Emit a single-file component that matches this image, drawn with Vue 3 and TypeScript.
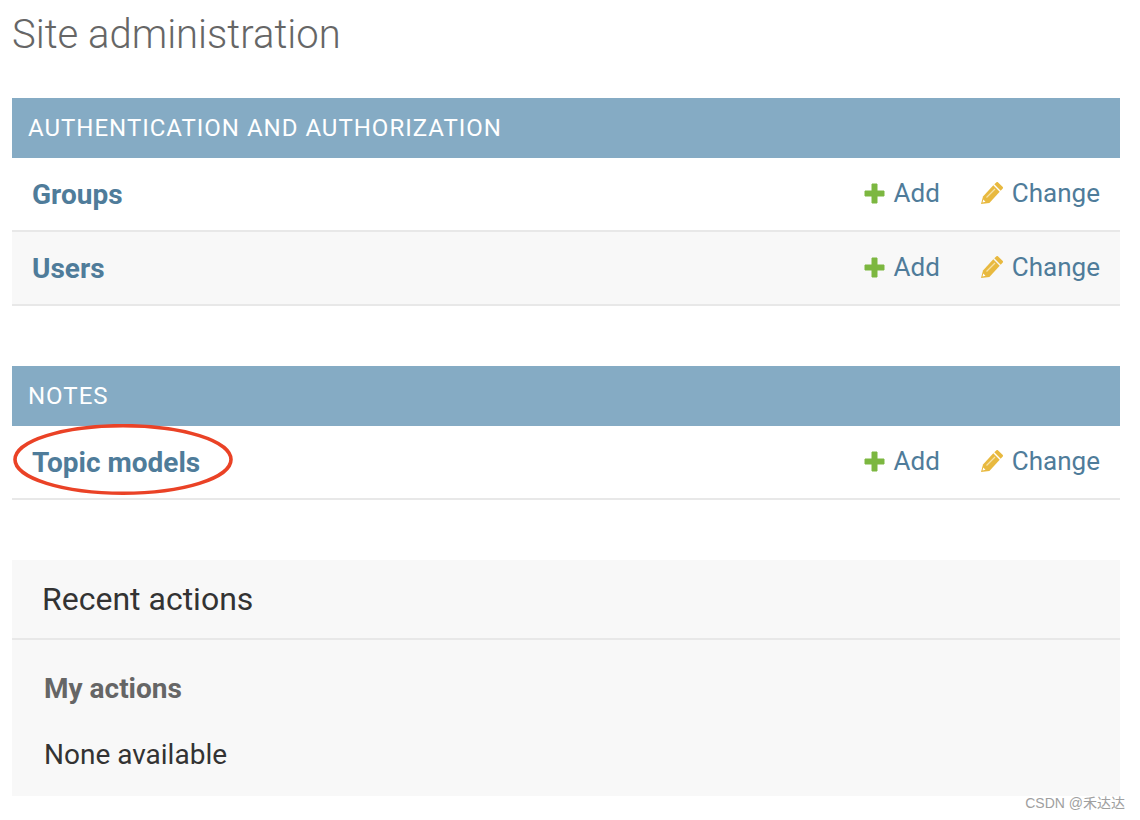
<script setup lang="ts">
interface Module {
  caption: string
  models: string[]
}

const modules: Module[] = [
  { caption: 'Authentication and Authorization', models: ['Groups', 'Users'] },
  { caption: 'Notes', models: ['Topic models'] },
]
</script>

<template>
  <div class="page">
    <h1 class="title">Site administration</h1>

    <section v-for="mod in modules" :key="mod.caption" class="module">
      <h2 class="caption">{{ mod.caption }}</h2>
      <div v-for="name in mod.models" :key="name" class="row">
        <a class="model">
          {{ name }}
          <svg v-if="name === 'Topic models'" class="circle" viewBox="0 0 222 74" width="222" height="74">
            <ellipse cx="110" cy="35.500" rx="108" ry="33.800" fill="none" stroke="#ea4226" stroke-width="3.600" />
          </svg>
        </a>
        <a class="action add">
          <svg viewBox="0 0 23 23" width="23" height="23">
            <path d="M9 2h5v7h7v5h-7v7H9v-7H2V9h7z" fill="#7cb740" stroke="#7cb740" stroke-width="1" stroke-linejoin="round" />
          </svg>
          Add
        </a>
        <a class="action change">
          <svg viewBox="0 0 24 24" width="24" height="24">
            <path d="M1 23l2-7.400L13.300 4.300l6.400 6.400L9.400 22z" fill="#e8b93f" />
            <path d="M14.300 3.300l2.200-2.100c.4-.4 1-.4 1.400 0l4.900 4.900c.4.400.4 1 0 1.400l-2.100 2.200z" fill="#e8b93f" />
            <path d="M6.500 16.500l8.500-8.500" stroke="#f6e2a8" stroke-width="1.200" fill="none" />
            <path d="M3.200 18.500l2.300 2.300-3 .8z" fill="#fff" />
          </svg>
          Change
        </a>
      </div>
    </section>

    <section class="recent">
      <h2 class="recent-title">Recent actions</h2>
      <div class="recent-body">
        <h3 class="mine">My actions</h3>
        <p class="none">None available</p>
      </div>
    </section>

    <span class="mark">CSDN @禾达达</span>
  </div>
</template>

<style>
html,
body {
  margin: 0;
  background: #fff;
}
</style>

<style scoped>
.page {
  position: relative;
  box-sizing: border-box;
  width: 1140px;
  height: 820px;
  overflow: hidden;
  padding: 0 20px 0 12px;
  font-family: Roboto, "Liberation Sans", sans-serif;
}

.title {
  margin: 0;
  height: 98px;
  padding-top: 10px;
  box-sizing: border-box;
  font-size: 40px;
  line-height: 50px;
  font-weight: 300;
  color: #666;
}

.module {
  margin-bottom: 60px;
}

.caption {
  margin: 0;
  height: 60px;
  padding: 0 16px;
  background: #85abc4;
  color: #fff;
  font-size: 24px;
  line-height: 60px;
  font-weight: 400;
  letter-spacing: 1px;
  text-transform: uppercase;
}

.row {
  display: flex;
  align-items: center;
  box-sizing: border-box;
  height: 74px;
  padding: 0 20px;
  border-bottom: 2px solid #e8e8e8;
  font-size: 26px;
  color: #4f7c9a;
}

.row:nth-of-type(even) {
  background: #f8f8f8;
}

.model {
  position: relative;
  margin-right: auto;
  font-size: 28px;
  font-weight: 700;
}

.circle {
  position: absolute;
  left: -19px;
  top: -22px;
}

.action {
  display: flex;
  align-items: center;
  gap: 8px;
  margin-bottom: 2px;
}

.add {
  margin-right: 40px;
}

.recent {
  height: 236px;
  background: #f8f8f8;
}

.recent-title {
  margin: 0;
  height: 80px;
  box-sizing: border-box;
  padding: 0 30px;
  border-bottom: 2px solid #e8e8e8;
  font-size: 32px;
  line-height: 78px;
  font-weight: 400;
  color: #333;
}

.recent-body {
  padding: 0 32px;
}

.mine {
  margin: 0;
  padding-top: 32px;
  font-size: 28px;
  line-height: 34px;
  font-weight: 700;
  color: #666;
}

.none {
  margin: 0;
  padding-top: 32px;
  font-size: 28px;
  line-height: 34px;
  color: #333;
}

.mark {
  position: absolute;
  right: 15px;
  bottom: 8px;
  font-family: "Liberation Sans", "Noto Sans CJK SC", sans-serif;
  font-size: 14px;
  color: #a0a0a0;
}
</style>
